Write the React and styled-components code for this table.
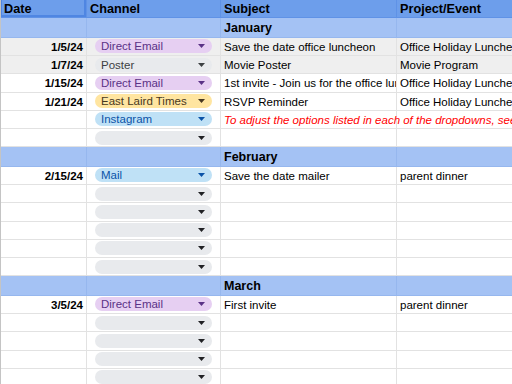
import React from "react";
import styled, { createGlobalStyle } from "styled-components";

const GlobalStyle = createGlobalStyle`
  html, body {
    margin: 0;
    padding: 0;
    background: #ffffff;
    overflow: hidden;
  }
  body {
    font-family: "Liberation Sans", Arial, sans-serif;
  }
`;

const chipColors = {
  "Direct Email": { bg: "#e6cff2", fg: "#5a3286" },
  Poster: { bg: "#e8eaed", fg: "#3c4043" },
  "East Laird Times": { bg: "#ffe5a0", fg: "#473821" },
  Instagram: { bg: "#bfe1f6", fg: "#0a53a8" },
  Mail: { bg: "#bfe1f6", fg: "#0a53a8" },
  "": { bg: "#e8eaed", fg: "#202124" },
};

const Sheet = styled.div`
  width: 512px;
  height: 384px;
  overflow: hidden;
  border-left: 1px solid #c4c4c4;
  box-sizing: border-box;
  display: flex;
  flex-direction: column;
`;

const Row = styled.div`
  display: grid;
  grid-template-columns: 86px 134px 176px 180px;
  flex: 0 0 auto;
  height: ${({ $h }) => $h}px;
  background: ${({ $bg }) => $bg || "#ffffff"};
`;

const Cell = styled.div`
  box-sizing: border-box;
  border-right: 1px solid ${({ $line }) => $line || "#e2e2e2"};
  border-bottom: 1px solid ${({ $line }) => $line || "#e2e2e2"};
  display: flex;
  align-items: center;
  padding: 1px 3px 0;
  font-size: 11.5px;
  color: #000000;
  white-space: nowrap;
  overflow: ${({ $spill }) => ($spill ? "visible" : "hidden")};
  justify-content: ${({ $right }) => ($right ? "flex-end" : "flex-start")};
  font-weight: ${({ $bold }) => ($bold ? 700 : 400)};
  position: relative;
  z-index: ${({ $spill }) => ($spill ? 1 : 0)};
`;

const HeadCell = styled(Cell)`
  font-size: 12.7px;
  font-weight: 700;
  padding: 0 3px;
  box-shadow: ${({ $selected }) => ($selected ? "inset -2px -2px 0 #4f86e2, inset 1px 0 0 #4f86e2" : "none")};
`;

const BandCell = styled(Cell)`
  font-size: 12.5px;
  font-weight: 700;
`;

const ChipCell = styled(Cell)`
  padding: 0 8px;
`;

const Chip = styled.div`
  flex: 1;
  height: 14px;
  border-radius: 7px;
  background: ${({ $bg }) => $bg};
  color: ${({ $fg }) => $fg};
  display: flex;
  align-items: center;
  justify-content: space-between;
  padding: 0 7px 0 6px;
  font-size: 11.5px;
`;

const Note = styled.span`
  color: #ff0000;
  font-style: italic;
`;

const Arrow = ({ color }) => (
  <svg width="7" height="4" viewBox="0 0 7 4">
    <path d="M0 0h7L3.5 4z" fill={color} />
  </svg>
);

const ChannelChip = ({ name }) => {
  const c = chipColors[name];
  return (
    <ChipCell>
      <Chip $bg={c.bg} $fg={c.fg}>
        <span>{name}</span>
        <Arrow color={c.fg} />
      </Chip>
    </ChipCell>
  );
};

const ROW_H = 18.25;
const BAND_H = 19.5;

const DataRow = ({ date, channel = "", subject, project, grey, note }) => (
  <Row $h={ROW_H} $bg={grey ? "#efefef" : "#ffffff"}>
    <Cell $right $bold>{date}</Cell>
    <ChannelChip name={channel} />
    <Cell $spill={!!note}>{note ? <Note>{note}</Note> : subject}</Cell>
    <Cell>{project}</Cell>
  </Row>
);

const Band = ({ title }) => (
  <Row $h={BAND_H} $bg="#a4c2f4">
    <BandCell $line="#96b7ee" />
    <BandCell $line="#96b7ee" />
    <BandCell $line="#96b7ee">{title}</BandCell>
    <BandCell $line="#96b7ee" />
  </Row>
);

const empty = (n) => Array.from({ length: n }, () => ({}));

const sections = [
  {
    title: "January",
    rows: [
      { date: "1/5/24", channel: "Direct Email", subject: "Save the date office luncheon", project: "Office Holiday Luncheon", grey: true },
      { date: "1/7/24", channel: "Poster", subject: "Movie Poster", project: "Movie Program", grey: true },
      { date: "1/15/24", channel: "Direct Email", subject: "1st invite - Join us for the office luncheon", project: "Office Holiday Luncheon" },
      { date: "1/21/24", channel: "East Laird Times", subject: "RSVP Reminder", project: "Office Holiday Luncheon" },
      { channel: "Instagram", note: "To adjust the options listed in each of the dropdowns, see the Data tab" },
      {},
    ],
  },
  {
    title: "February",
    rows: [
      { date: "2/15/24", channel: "Mail", subject: "Save the date mailer", project: "parent dinner" },
      ...empty(5),
    ],
  },
  {
    title: "March",
    rows: [
      { date: "3/5/24", channel: "Direct Email", subject: "First invite", project: "parent dinner" },
      ...empty(5),
    ],
  },
];

export default function App() {
  return (
    <>
      <GlobalStyle />
      <Sheet>
        <Row $h={18.3} $bg="#6d9eeb">
          <HeadCell $line="#5f92e6" $selected>Date</HeadCell>
          <HeadCell $line="#5f92e6">Channel</HeadCell>
          <HeadCell $line="#5f92e6">Subject</HeadCell>
          <HeadCell $line="#5f92e6">Project/Event</HeadCell>
        </Row>
        {sections.map((s) => (
          <React.Fragment key={s.title}>
            <Band title={s.title} />
            {s.rows.map((r, i) => (
              <DataRow key={i} {...r} />
            ))}
          </React.Fragment>
        ))}
      </Sheet>
    </>
  );
}
